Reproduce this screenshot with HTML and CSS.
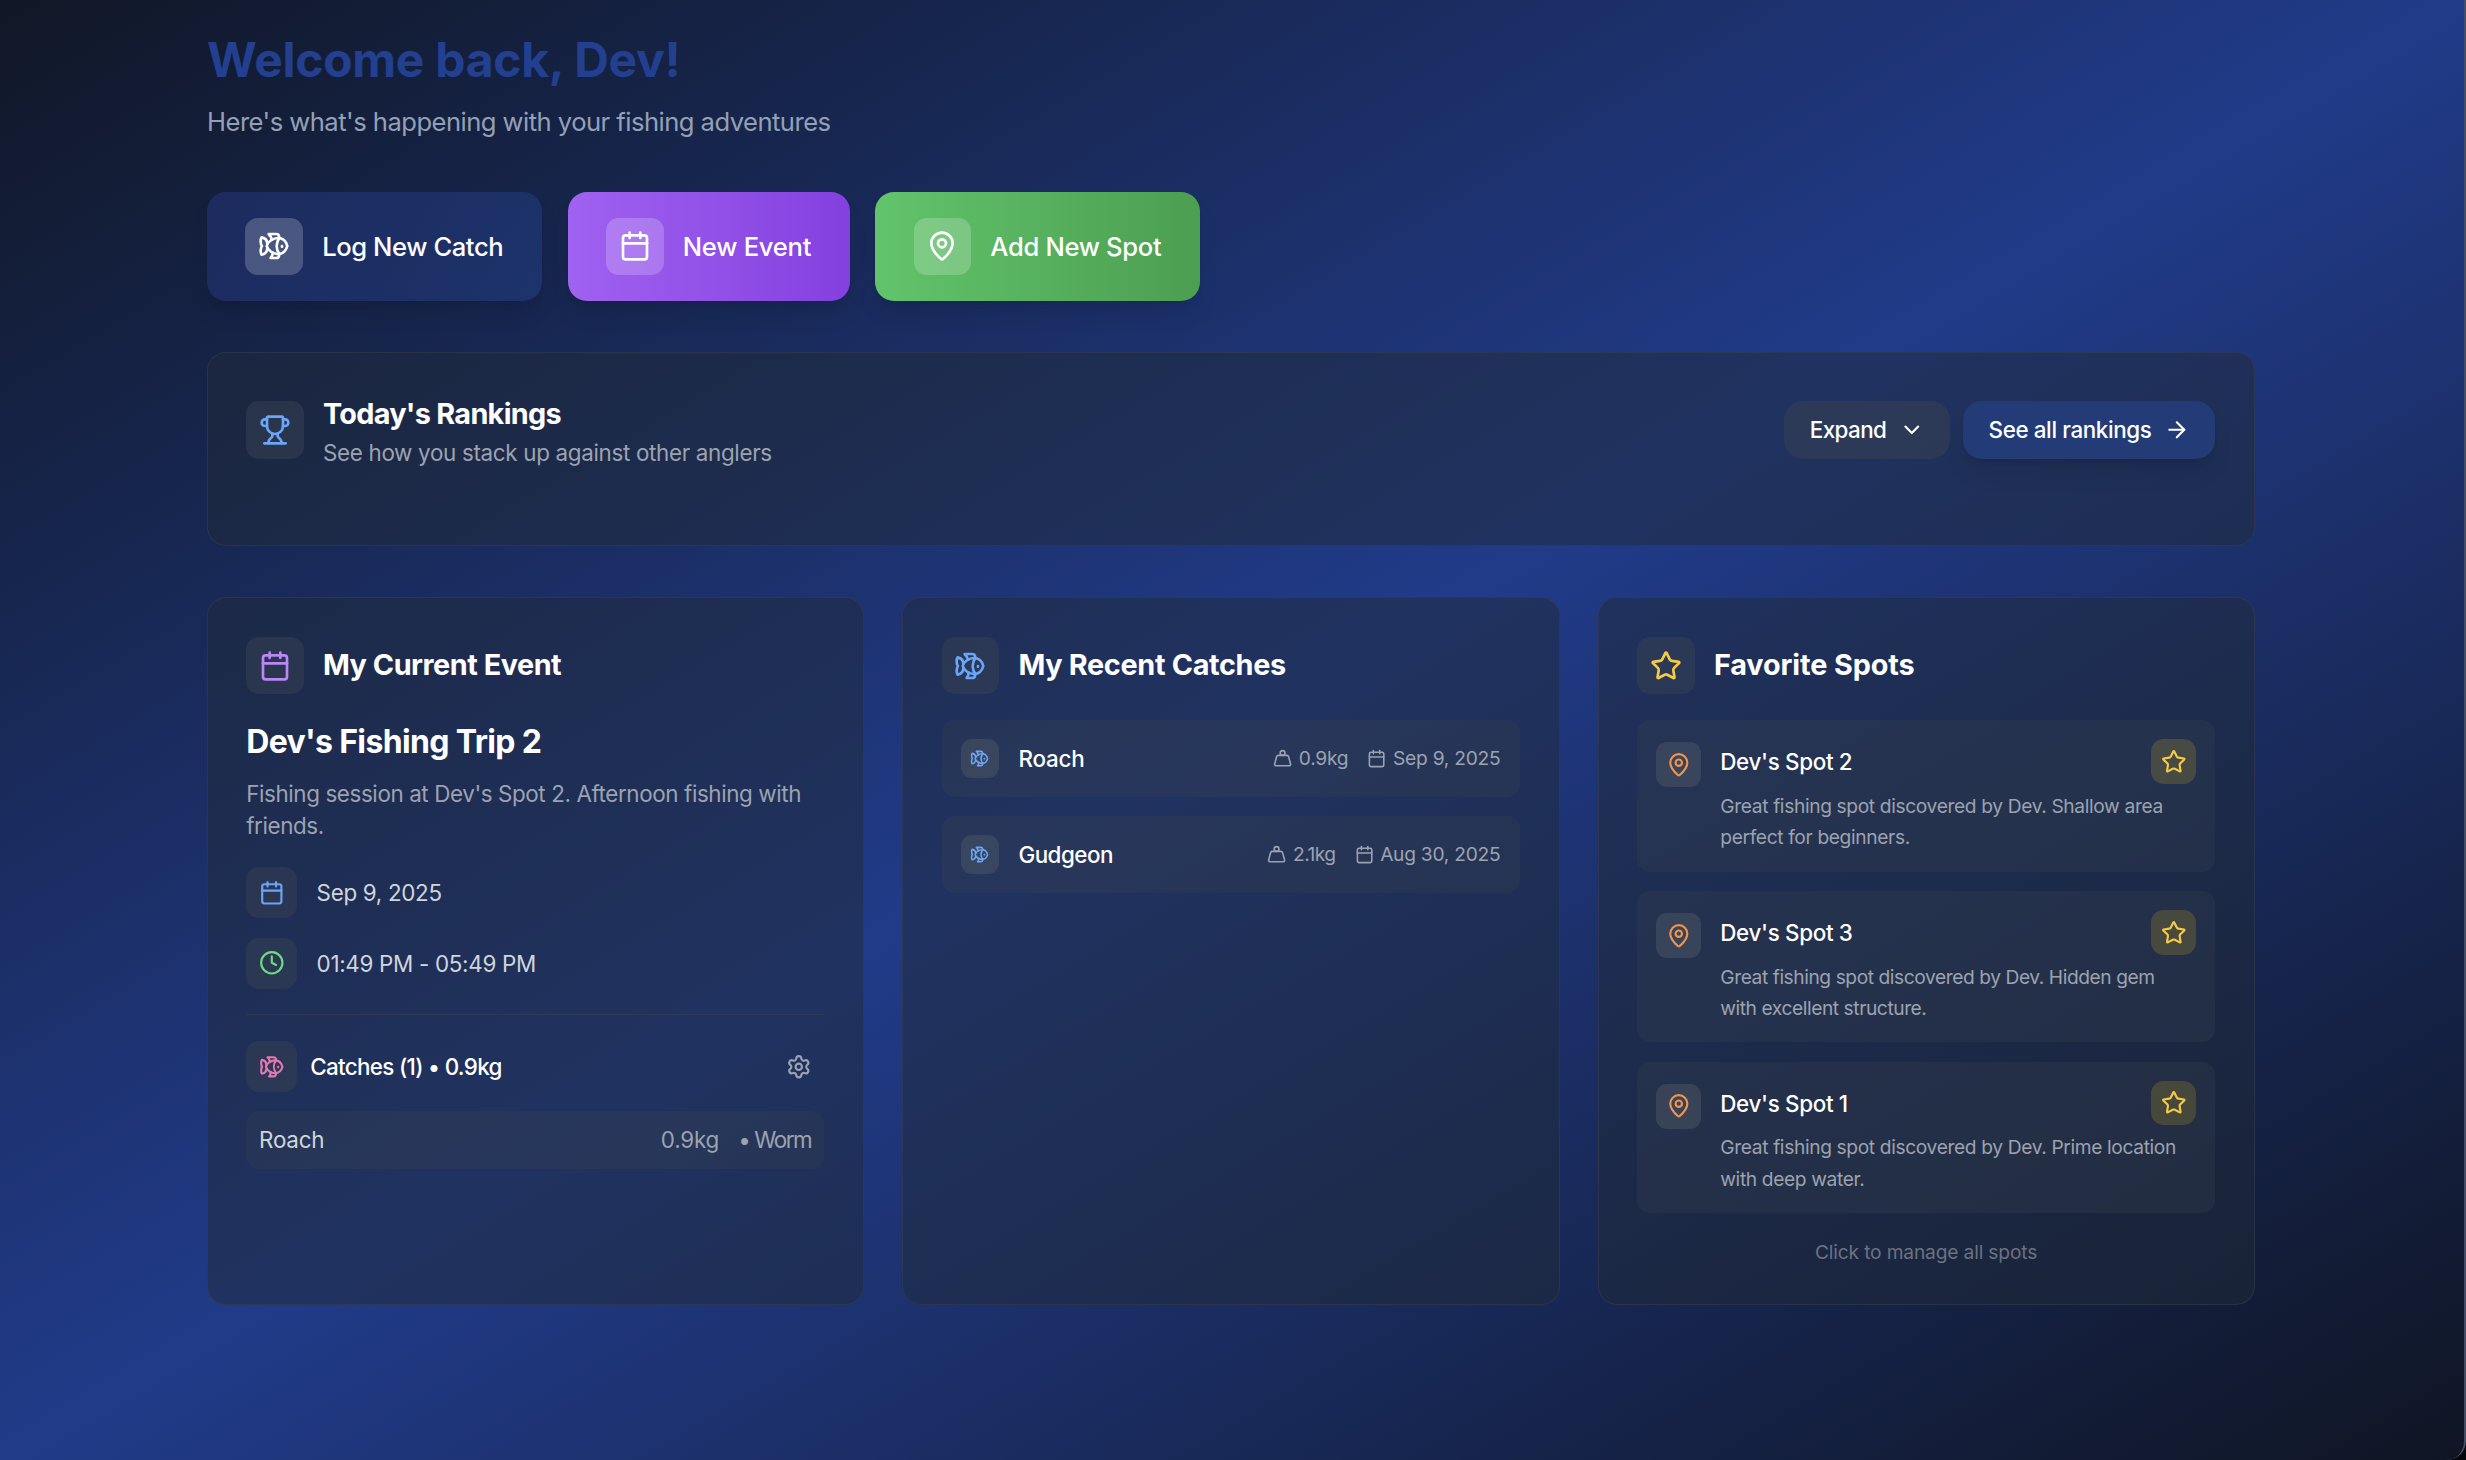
FILE: index.html
```html
<!DOCTYPE html>
<html lang="en">
<head>
<meta charset="utf-8">
<title>Fishing Dashboard</title>
<link rel="stylesheet" href="styles.css">
</head>
<body>
<svg class="sprite" aria-hidden="true">
  <symbol id="fish" viewBox="0 0 24 24"><path d="M6.5 12c.94-3.46 4.94-6 8.5-6 3.56 0 6.06 2.54 7 6-.94 3.47-3.44 6-7 6s-7.56-2.53-8.5-6Z"/><path d="M18 12v.5"/><path d="M16 17.93a9.77 9.77 0 0 1 0-11.86"/><path d="M7 10.67C7 8 5.58 5.97 2.73 5.5c-1 1.5-1 5 .23 6.5-1.24 1.5-1.24 5-.23 6.5C5.58 18.03 7 16 7 13.33"/><path d="M10.46 7.26C10.2 5.88 9.17 4.24 8 3h5.8a2 2 0 0 1 1.98 1.67l.23 1.4"/><path d="m16.01 17.93-.23 1.4A2 2 0 0 1 13.8 21H9.5a5.96 5.96 0 0 0 1.49-3.98"/></symbol>
  <symbol id="calendar" viewBox="0 0 24 24"><path d="M8 2v4"/><path d="M16 2v4"/><rect width="18" height="18" x="3" y="4" rx="2"/><path d="M3 10h18"/></symbol>
  <symbol id="pin" viewBox="0 0 24 24"><path d="M20 10c0 4.993-5.539 10.193-7.399 11.799a1 1 0 0 1-1.202 0C9.539 20.193 4 14.993 4 10a8 8 0 0 1 16 0"/><circle cx="12" cy="10" r="3"/></symbol>
  <symbol id="trophy" viewBox="0 0 24 24"><path d="M10 14.66v1.626a2 2 0 0 1-.976 1.696A5 5 0 0 0 7 21.978"/><path d="M14 14.66v1.626a2 2 0 0 0 .976 1.696A5 5 0 0 1 17 21.978"/><path d="M18 9h1.5a2.5 2.5 0 0 0 0-5H18"/><path d="M4 22h16"/><path d="M6 9a6 6 0 0 0 12 0V3a1 1 0 0 0-1-1H7a1 1 0 0 0-1 1z"/><path d="M6 9H4.5a2.5 2.5 0 0 1 0-5H6"/></symbol>
  <symbol id="star" viewBox="0 0 24 24"><path d="M11.525 2.295a.53.53 0 0 1 .95 0l2.31 4.679a2.123 2.123 0 0 0 1.595 1.16l5.166.756a.53.53 0 0 1 .294.904l-3.736 3.638a2.123 2.123 0 0 0-.611 1.878l.882 5.14a.53.53 0 0 1-.771.56l-4.618-2.428a2.122 2.122 0 0 0-1.973 0L6.396 21.01a.53.53 0 0 1-.77-.56l.881-5.139a2.122 2.122 0 0 0-.611-1.879L2.16 9.795a.53.53 0 0 1 .294-.906l5.165-.755a2.122 2.122 0 0 0 1.597-1.16z"/></symbol>
  <symbol id="weight" viewBox="0 0 24 24"><circle cx="12" cy="5" r="3"/><path d="M6.5 8a2 2 0 0 0-1.905 1.46L2.1 18.5A2 2 0 0 0 4 21h16a2 2 0 0 0 1.925-2.54L19.4 9.5A2 2 0 0 0 17.48 8Z"/></symbol>
  <symbol id="gear" viewBox="0 0 24 24"><path d="M9.671 4.136a2.34 2.34 0 0 1 4.659 0 2.34 2.34 0 0 0 3.319 1.915 2.34 2.34 0 0 1 2.33 4.033 2.34 2.34 0 0 0 0 3.831 2.34 2.34 0 0 1-2.33 4.033 2.34 2.34 0 0 0-3.319 1.915 2.34 2.34 0 0 1-4.659 0 2.34 2.34 0 0 0-3.32-1.915 2.34 2.34 0 0 1-2.33-4.033 2.34 2.34 0 0 0 0-3.831A2.34 2.34 0 0 1 6.35 6.051a2.34 2.34 0 0 0 3.319-1.915"/><circle cx="12" cy="12" r="3"/></symbol>
  <symbol id="clock" viewBox="0 0 24 24"><circle cx="12" cy="12" r="10"/><path d="M12 6v6l4 2"/></symbol>
  <symbol id="chevron" viewBox="0 0 24 24"><path d="m6 9 6 6 6-6"/></symbol>
  <symbol id="arrow" viewBox="0 0 24 24"><path d="M5 12h14"/><path d="m12 5 7 7-7 7"/></symbol>
</svg>
<div class="page">
<main class="container">
  <header class="welcome">
    <h1>Welcome back, Dev!</h1>
    <p>Here's what's happening with your fishing adventures</p>
  </header>

  <nav class="actions">
    <button class="action action-catch"><span class="glass"><svg class="icon i20"><use href="#fish"/></svg></span><span class="action-label ls-catch">Log New Catch</span></button>
    <button class="action action-event"><span class="glass"><svg class="icon i20"><use href="#calendar"/></svg></span><span class="action-label ls-event">New Event</span></button>
    <button class="action action-spot"><span class="glass"><svg class="icon i20"><use href="#pin"/></svg></span><span class="action-label">Add New Spot</span></button>
  </nav>

  <section class="card rankings">
    <div class="rankings-head">
      <span class="tile t36 blue"><svg class="icon i20"><use href="#trophy"/></svg></span>
      <div class="rankings-text">
        <h2 class="ls-today">Today's Rankings</h2>
        <p>See how you stack up against other anglers</p>
      </div>
      <div class="rankings-buttons">
        <button class="btn btn-gray"><span class="ls-expand">Expand</span><svg class="icon i16"><use href="#chevron"/></svg></button>
        <button class="btn btn-blue"><span>See all rankings</span><svg class="icon i16"><use href="#arrow"/></svg></button>
      </div>
    </div>
  </section>

  <div class="columns">
    <section class="card">
      <div class="card-head"><span class="tile t36 purple"><svg class="icon i20"><use href="#calendar"/></svg></span><h2 class="ls-current">My Current Event</h2></div>
      <h3 class="event-name">Dev's Fishing Trip 2</h3>
      <p class="event-desc">Fishing session at Dev's Spot 2. Afternoon fishing with friends.</p>
      <div class="event-meta"><span class="tile t32 blue"><svg class="icon i16"><use href="#calendar"/></svg></span><span>Sep 9, 2025</span></div>
      <div class="event-meta"><span class="tile t32 green"><svg class="icon i16"><use href="#clock"/></svg></span><span>01:49 PM - 05:49 PM</span></div>
      <div class="event-catches">
        <div class="catches-head">
          <span class="tile t32 pink"><svg class="icon i16"><use href="#fish"/></svg></span>
          <span class="catches-title">Catches (1) • 0.9kg</span>
          <button class="gear-btn" aria-label="Settings"><svg class="icon i16"><use href="#gear"/></svg></button>
        </div>
        <div class="bait-row"><span class="bait-fish">Roach</span><span>0.9kg</span><span class="bait">• Worm</span></div>
      </div>
    </section>

    <section class="card">
      <div class="card-head"><span class="tile t36 blue"><svg class="icon i20"><use href="#fish"/></svg></span><h2 class="ls-recent">My Recent Catches</h2></div>
      <div class="list">
        <div class="catch-row">
          <span class="tile t24 blue"><svg class="icon i12"><use href="#fish"/></svg></span>
          <span class="catch-name">Roach</span>
          <span class="meta"><svg class="icon i12"><use href="#weight"/></svg>0.9kg</span>
          <span class="meta"><svg class="icon i12"><use href="#calendar"/></svg>Sep 9, 2025</span>
        </div>
        <div class="catch-row">
          <span class="tile t24 blue"><svg class="icon i12"><use href="#fish"/></svg></span>
          <span class="catch-name ls-gudgeon">Gudgeon</span>
          <span class="meta"><svg class="icon i12"><use href="#weight"/></svg><span class="ls-weight">2.1kg</span></span>
          <span class="meta"><svg class="icon i12"><use href="#calendar"/></svg>Aug 30, 2025</span>
        </div>
      </div>
    </section>

    <section class="card">
      <div class="card-head"><span class="tile t36 yellow"><svg class="icon i20"><use href="#star"/></svg></span><h2 class="ls-favorite">Favorite Spots</h2></div>
      <div class="list">
        <article class="spot">
          <span class="tile t28 orange"><svg class="icon i16"><use href="#pin"/></svg></span>
          <div class="spot-body">
            <div class="spot-head"><h4>Dev's Spot 2</h4><button class="star-btn" aria-label="Unfavorite"><svg class="icon i16"><use href="#star"/></svg></button></div>
            <p>Great fishing spot discovered by Dev. Shallow area perfect for beginners.</p>
          </div>
        </article>
        <article class="spot">
          <span class="tile t28 orange"><svg class="icon i16"><use href="#pin"/></svg></span>
          <div class="spot-body">
            <div class="spot-head"><h4>Dev's Spot 3</h4><button class="star-btn" aria-label="Unfavorite"><svg class="icon i16"><use href="#star"/></svg></button></div>
            <p class="ls-hidden-gem">Great fishing spot discovered by Dev. Hidden gem with excellent structure.</p>
          </div>
        </article>
        <article class="spot">
          <span class="tile t28 orange"><svg class="icon i16"><use href="#pin"/></svg></span>
          <div class="spot-body">
            <div class="spot-head"><h4>Dev's Spot 1</h4><button class="star-btn" aria-label="Unfavorite"><svg class="icon i16"><use href="#star"/></svg></button></div>
            <p>Great fishing spot discovered by Dev. Prime location with deep water.</p>
          </div>
        </article>
      </div>
      <p class="manage">Click to manage all spots</p>
    </section>
  </div>
</main>
</div>
</body>
</html>
```

FILE: styles.css
```css
* { box-sizing: border-box; }
html { background: #05070c; }
body { margin: 0; font-family: "Inter", "Liberation Sans", sans-serif; color: #fff; }
h1, h2, h3, h4, p { margin: 0; }
button { font: inherit; color: inherit; border: 0; margin: 0; padding: 0; background: none; white-space: nowrap; }
.sprite { position: absolute; width: 0; height: 0; }

.page {
  width: 2466px;
  height: 1460px;
  overflow: hidden;
  border-right: 2px solid #444d63;
  border-bottom-right-radius: 19px;
  background: linear-gradient(to bottom right, #101726 0%, #213b89 50%, #0f1523 100%);
}
.container { width: 2048px; margin-left: 207px; padding-top: 31px; }

.icon { display: block; flex: none; fill: none; stroke: currentColor; stroke-width: 2; stroke-linecap: round; stroke-linejoin: round; }
.i20 { width: 32px; height: 32px; }
.i16 { width: 25.6px; height: 25.6px; }
.i12 { width: 19.2px; height: 19.2px; }

/* Header */
.welcome h1 { font-size: 48px; line-height: 57.6px; font-weight: 700; letter-spacing: -0.0058em; color: #22408f; }
.welcome p { margin-top: 14.3px; font-size: 25.6px; line-height: 38.4px; letter-spacing: -0.0208em; color: #94a0b5; }

/* Quick actions */
.actions { display: flex; gap: 25.6px; margin-top: 50.7px; }
.action {
  display: flex; align-items: center; gap: 19.2px; height: 108.8px; padding: 0 38.4px;
  border-radius: 19.2px; font-size: 25.6px; font-weight: 550;
  box-shadow: 0 16px 24px -5px rgba(0, 0, 0, .1), 0 6px 10px -6px rgba(0, 0, 0, .12);
}
.action-catch { width: 335px; background: linear-gradient(120deg, #1d2b5e, #1c336b); }
.action-event { width: 282px; background: linear-gradient(to right, #a062f1, #8440df); }
.action-spot { width: 325px; background: linear-gradient(to right, #61c46b, #4c9e51); }
.glass { display: flex; align-items: center; justify-content: center; flex: none; width: 57.6px; height: 57.6px; border-radius: 12.8px; background: rgba(255, 255, 255, .2); }
.action-label { white-space: nowrap; letter-spacing: -0.013em; }
.ls-catch { letter-spacing: -0.0165em; }
.ls-event { letter-spacing: -0.0105em; }

/* Cards */
.card { padding: 38.6px 39px 39px 38.2px; border: 1px solid rgba(55, 65, 81, .5); border-radius: 19.2px; background: rgba(31, 41, 55, .5); }
h2 { font-size: 28.8px; line-height: 44.8px; font-weight: 650; }
.ls-current { letter-spacing: -0.0165em; }
.ls-today { letter-spacing: -0.024em; }
.ls-recent { letter-spacing: -0.011em; }
.ls-favorite { letter-spacing: -0.004em; }

.tile { display: flex; align-items: center; justify-content: center; flex: none; border-radius: 12.8px; background: rgba(55, 65, 81, .5); }
.t36 { width: 57.6px; height: 57.6px; }
.t32 { width: 51.2px; height: 51.2px; }
.t28 { width: 44.8px; height: 44.8px; }
.t24 { width: 38.4px; height: 38.4px; }
.t24, .t28 { background: rgba(75, 85, 99, .5); border-radius: 11px; }
.blue { color: #6aa5f8; }
.purple { color: #bb86f8; }
.green { color: #6edb83; }
.pink { color: #e677b3; }
.orange { color: #f0944c; }
.yellow { color: #f5cb46; }

/* Rankings */
.rankings { height: 194px; margin-top: 51.2px; }
.rankings-head { display: flex; align-items: center; gap: 19.2px; }
.rankings-text { flex: 1; }
.rankings-text p { margin: 1px 0 -1px; font-size: 22.4px; line-height: 32px; letter-spacing: -0.0142em; color: #9ca3af; }
.rankings-buttons { display: flex; gap: 12.8px; }
.btn { display: flex; align-items: center; gap: 12.8px; height: 57.6px; padding: 0 25.6px; border-radius: 19.2px; font-size: 22.4px; font-weight: 500; letter-spacing: -0.0172em; }
.btn-gray { width: 166px; background: rgba(55, 65, 81, .5); }
.btn-blue { width: 252px; background: rgba(37, 65, 132, .7); box-shadow: 0 16px 24px -5px rgba(0, 0, 0, .1), 0 6px 10px -6px rgba(0, 0, 0, .12); }
.ls-expand { letter-spacing: -0.027em; }

/* Columns */
.columns { display: grid; grid-template-columns: repeat(3, 1fr); gap: 38.4px; margin-top: 51.2px; }
.card-head { display: flex; align-items: center; gap: 19.2px; margin-bottom: 25.6px; }

.event-name { font-size: 32px; line-height: 44.8px; font-weight: 650; letter-spacing: -0.02em; }
.event-desc { margin-top: 12.8px; margin-bottom: 25.6px; font-size: 22.4px; line-height: 32px; letter-spacing: -0.0175em; color: #9ca3af; }
.event-meta { display: flex; align-items: center; gap: 19.2px; margin-bottom: 19.2px; font-size: 22.4px; letter-spacing: -0.0135em; color: #d1d5db; }
.event-catches { margin-top: 25.6px; padding-top: 25.6px; border-top: 1px solid rgba(55, 65, 81, .6); }
.catches-head { display: flex; align-items: center; gap: 12.8px; font-size: 22.4px; font-weight: 500; }
.catches-title { flex: 1; letter-spacing: -0.03em; }
.gear-btn { padding: 12.8px; color: #9ca3af; }
.bait-row { display: flex; gap: 19.2px; margin-top: 19.2px; padding: 12.8px; border-radius: 12.8px; background: rgba(55, 65, 81, .3); font-size: 22.4px; line-height: 32px; letter-spacing: -0.0085em; color: #9ca3af; }
.bait-fish { flex: 1; color: #d1d5db; }
.bait { letter-spacing: -0.065em; }

.list { display: grid; gap: 19.2px; }
.catch-row { display: flex; align-items: center; gap: 19.2px; height: 76.8px; padding: 0 19.2px; border-radius: 12.8px; background: rgba(55, 65, 81, .3); }
.catch-name { flex: 1; font-size: 22.4px; font-weight: 500; letter-spacing: -0.0075em; }
.ls-gudgeon { letter-spacing: -0.0225em; }
.meta { display: flex; align-items: center; gap: 6.4px; font-size: 19.2px; letter-spacing: -0.0135em; color: #9ca3af; }
.ls-weight { letter-spacing: -0.03em; }

.spot { display: flex; gap: 19.2px; height: 151.6px; padding: 19.2px; border-radius: 12.8px; background: rgba(55, 65, 81, .3); }
.spot > .tile { margin-top: 3.2px; }
.spot-body { flex: 1; min-width: 0; }
.spot-head { display: flex; align-items: center; justify-content: space-between; }
.spot h4 { font-size: 22.4px; font-weight: 500; letter-spacing: -0.0145em; }
.star-btn { padding: 9.6px; border-radius: 12.8px; color: #f5cb46; background: rgba(250, 204, 21, .17); }
.spot p { margin-top: 7px; padding-right: 10px; font-size: 19.2px; line-height: 31.2px; letter-spacing: -0.019em; color: #9ca3af; }
.spot .ls-hidden-gem { letter-spacing: -0.0225em; }
.manage { margin-top: 26.8px; text-align: center; font-size: 19.2px; line-height: 25.6px; letter-spacing: -0.0086em; color: #6b7280; }
```
